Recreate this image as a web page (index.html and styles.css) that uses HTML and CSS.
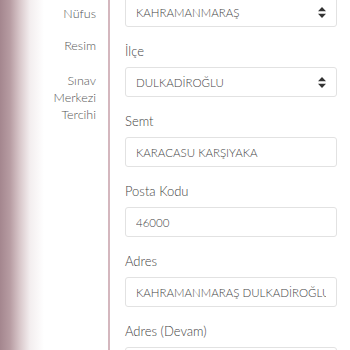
FILE: index.html
```html
<!DOCTYPE html>
<html lang="tr">

<head>
  <meta charset="UTF-8" />
  <meta name="viewport" content="width=device-width, initial-scale=1.0" />
  <title>Profil</title>
  <link rel="stylesheet" href="styles.css">
</head>

<body>
  <div class="page">
    <div class="side">
      <div class="side-item">Nüfus</div>
      <div class="side-item">Resim</div>
      <div class="side-item">Sınav<br>Merkezi<br>Tercihi</div>
    </div>

    <div class="form">
      <div class="select-box first">
        <select class="field"><option>KAHRAMANMARAŞ</option></select>
        <svg class="arrow" width="8" height="11" viewBox="0 0 8 11"><path d="M4 0 L8 4.2 H0 Z M4 11 L8 6.8 H0 Z" fill="#333"/></svg>
      </div>

      <label class="label">İlçe</label>
      <div class="select-box">
        <select class="field"><option>DULKADİROĞLU</option></select>
        <svg class="arrow" width="8" height="11" viewBox="0 0 8 11"><path d="M4 0 L8 4.2 H0 Z M4 11 L8 6.8 H0 Z" fill="#333"/></svg>
      </div>

      <label class="label">Semt</label>
      <input class="field" type="text" value="KARACASU KARŞIYAKA">

      <label class="label">Posta Kodu</label>
      <input class="field" type="text" value="46000">

      <label class="label">Adres</label>
      <input class="field" type="text" value="KAHRAMANMARAŞ DULKADİROĞLU KARACASU">

      <label class="label">Adres (Devam)</label>
      <input class="field" type="text" value="">
    </div>
  </div>
</body>

</html>
```
FILE: styles.css
```css
body {
  margin: 0;
  font-family: Lato, "Open Sans", sans-serif;
  font-weight: 300;
  background: #fff;
  color: #444;
  overflow: hidden;
}

.page {
  display: flex;
  height: 350px;
  overflow: hidden;
}

.side {
  width: 110px;
  flex: 0 0 110px;
  box-sizing: border-box;
  padding: 5px 12px 0 0;
  text-align: right;
  background: linear-gradient(to right, #a4868e 0, #b79ca2 10px, #d9c8cb 20px, #f3eeef 30px, #fff 44px);
  border-right: 2px solid #d4b7be;
  font-size: 12.5px;
  line-height: 17px;
  color: #555;
}

.side-item {
  margin-bottom: 15px;
}

.side-item:nth-child(2) {
  margin-bottom: 18px;
}

.form {
  flex: 1;
  padding: 0 13px 0 15px;
}

.label {
  display: block;
  font-size: 13px;
  line-height: 20px;
  margin: 14px 0 6px;
  color: #444;
}

.field {
  display: block;
  width: 100%;
  height: 30px;
  box-sizing: border-box;
  padding: 0 10px;
  border: 1px solid #e2e2e2;
  border-radius: 3px;
  background: #fff;
  font-family: inherit;
  font-weight: 300;
  font-size: 11.5px;
  color: #444;
  outline: none;
}

select.field {
  appearance: none;
  -webkit-appearance: none;
}

.select-box {
  position: relative;
}

.select-box.first {
  margin-top: -3px;
}

.arrow {
  position: absolute;
  right: 11px;
  top: 10px;
}
```
